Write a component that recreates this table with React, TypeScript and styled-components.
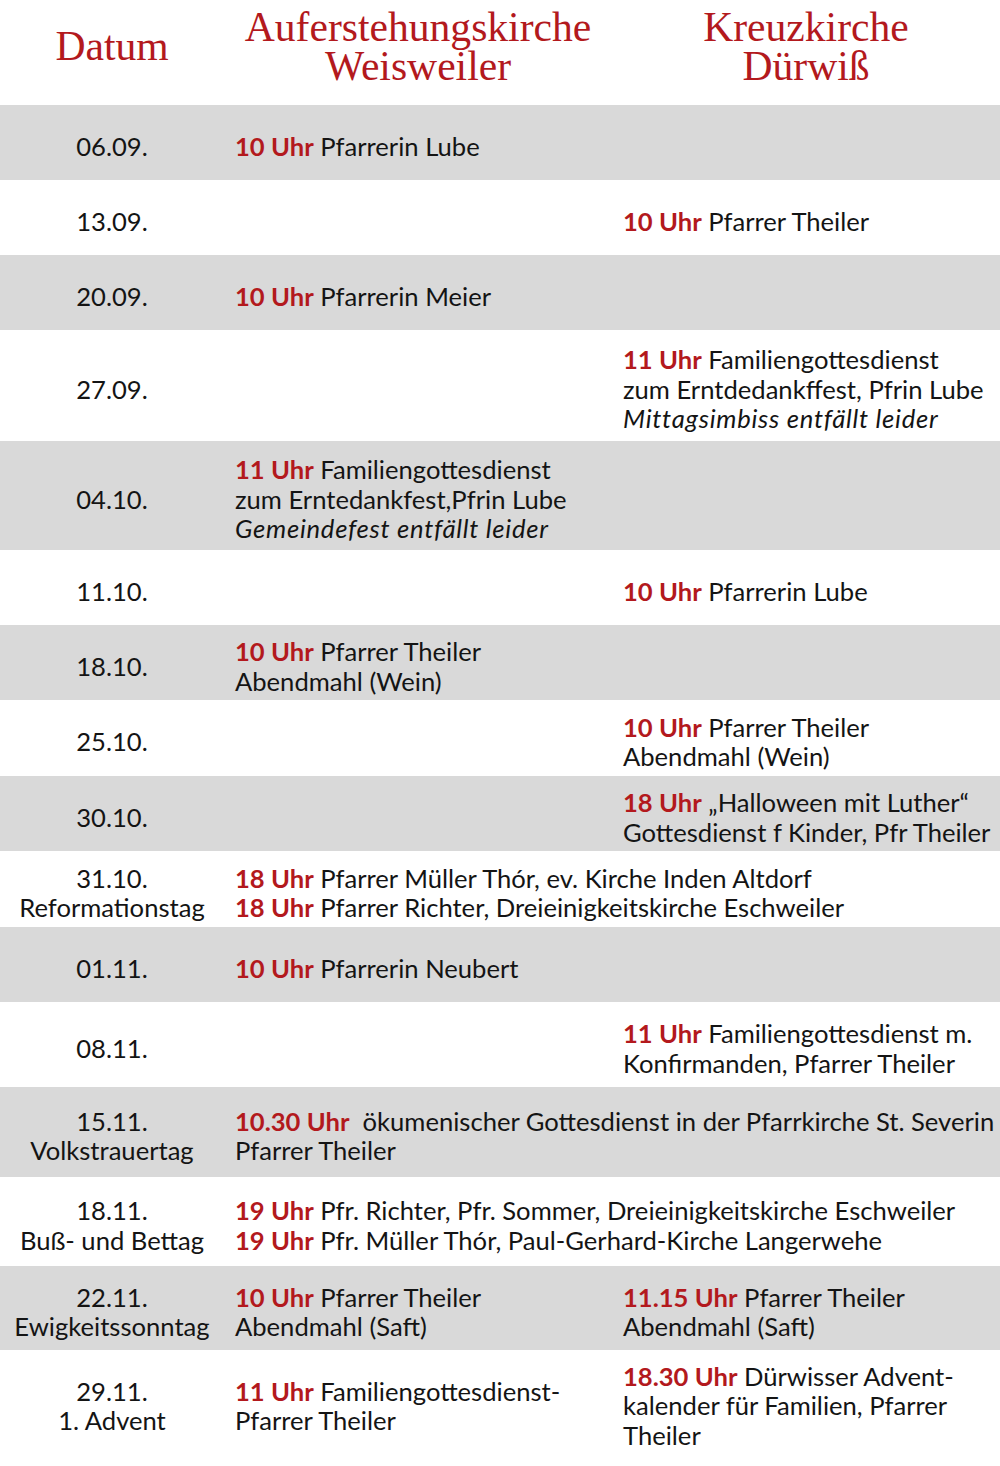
import React from 'react';
import styled, { createGlobalStyle } from 'styled-components';

const Global = createGlobalStyle`
  html, body { margin: 0; padding: 0; background: #fff; }
  body { font-family: Lato, "Noto Sans", sans-serif; color: #141414; }
  * { box-sizing: border-box; }
`;

const RED = '#b3191d';

const Table = styled.div`
  width: 1000px;
`;

const HeaderRow = styled.div`
  display: grid;
  grid-template-columns: 224px 388px 388px;
  height: 105px;
  padding-bottom: 12px;
  align-items: center;
`;

const HeadCell = styled.div`
  font-family: "Liberation Serif", "Times New Roman", serif;
  font-size: 41.6px;
  line-height: 39px;
  color: ${RED};
  text-align: center;
`;

const Row = styled.div<{ $shade: boolean; $h: number }>`
  display: grid;
  grid-template-columns: 224px 388px 388px;
  height: ${(p) => p.$h}px;
  padding-top: 8px;
  align-items: center;
  background: ${(p) => (p.$shade ? '#d9d9d9' : '#ffffff')};
`;

const DateCell = styled.div`
  text-align: center;
  font-size: 25.6px;
  line-height: 29.5px;
  white-space: nowrap;
`;

const Cell = styled.div<{ $span?: boolean }>`
  padding-left: 11px;
  grid-column: ${(p) => (p.$span ? '2 / 4' : 'auto')};
  font-size: 25.6px;
  line-height: 29.5px;
`;

const Line = styled.div<{ $italic?: boolean }>`
  white-space: nowrap;
  font-style: ${(p) => (p.$italic ? 'italic' : 'normal')};
  letter-spacing: ${(p) => (p.$italic ? '0.75px' : '0')};
`;

const Time = styled.span`
  color: ${RED};
  font-weight: 700;
`;

type Seg = { t?: string; s: string; i?: boolean };
type RowData = {
  d: string[];
  h: number;
  c2?: Seg[];
  c3?: Seg[];
  span?: boolean;
};

const rows: RowData[] = [
  { d: ['06.09.'], h: 75, c2: [{ t: '10 Uhr', s: 'Pfarrerin Lube' }] },
  { d: ['13.09.'], h: 75, c3: [{ t: '10 Uhr', s: 'Pfarrer Theiler' }] },
  { d: ['20.09.'], h: 75, c2: [{ t: '10 Uhr', s: 'Pfarrerin Meier' }] },
  {
    d: ['27.09.'],
    h: 111,
    c3: [
      { t: '11 Uhr', s: 'Familiengottesdienst' },
      { s: 'zum Erntdedankffest, Pfrin Lube' },
      { s: 'Mittagsimbiss entfällt leider', i: true },
    ],
  },
  {
    d: ['04.10.'],
    h: 109,
    c2: [
      { t: '11 Uhr', s: 'Familiengottesdienst' },
      { s: 'zum Erntedankfest,Pfrin Lube' },
      { s: 'Gemeindefest entfällt leider', i: true },
    ],
  },
  { d: ['11.10.'], h: 75, c3: [{ t: '10 Uhr', s: 'Pfarrerin Lube' }] },
  {
    d: ['18.10.'],
    h: 75,
    c2: [{ t: '10 Uhr', s: 'Pfarrer Theiler' }, { s: 'Abendmahl (Wein)' }],
  },
  {
    d: ['25.10.'],
    h: 76,
    c3: [{ t: '10 Uhr', s: 'Pfarrer Theiler' }, { s: 'Abendmahl (Wein)' }],
  },
  {
    d: ['30.10.'],
    h: 75,
    c3: [
      { t: '18 Uhr', s: '„Halloween mit Luther“' },
      { s: 'Gottesdienst f Kinder, Pfr Theiler' },
    ],
  },
  {
    d: ['31.10.', 'Reformationstag'],
    h: 76,
    span: true,
    c2: [
      { t: '18 Uhr', s: 'Pfarrer Müller Thór, ev. Kirche Inden Altdorf' },
      { t: '18 Uhr', s: 'Pfarrer Richter, Dreieinigkeitskirche Eschweiler' },
    ],
  },
  { d: ['01.11.'], h: 75, c2: [{ t: '10 Uhr', s: 'Pfarrerin Neubert' }] },
  {
    d: ['08.11.'],
    h: 85,
    c3: [
      { t: '11 Uhr', s: 'Familiengottesdienst m.' },
      { s: 'Konfirmanden, Pfarrer Theiler' },
    ],
  },
  {
    d: ['15.11.', 'Volkstrauertag'],
    h: 90,
    span: true,
    c2: [
      { t: '10.30 Uhr', s: '\u00a0ökumenischer Gottesdienst in der Pfarrkirche St. Severin' },
      { s: 'Pfarrer Theiler' },
    ],
  },
  {
    d: ['18.11.', 'Buß- und Bettag'],
    h: 89,
    span: true,
    c2: [
      { t: '19 Uhr', s: 'Pfr. Richter, Pfr. Sommer, Dreieinigkeitskirche Eschweiler' },
      { t: '19 Uhr', s: 'Pfr. Müller Thór, Paul-Gerhard-Kirche Langerwehe' },
    ],
  },
  {
    d: ['22.11.', 'Ewigkeitssonntag'],
    h: 84,
    c2: [{ t: '10 Uhr', s: 'Pfarrer Theiler' }, { s: 'Abendmahl (Saft)' }],
    c3: [{ t: '11.15 Uhr', s: 'Pfarrer Theiler' }, { s: 'Abendmahl (Saft)' }],
  },
  {
    d: ['29.11.', '1. Advent'],
    h: 104,
    c2: [{ t: '11 Uhr', s: 'Familiengottesdienst-' }, { s: 'Pfarrer Theiler' }],
    c3: [
      { t: '18.30 Uhr', s: 'Dürwisser Advent-' },
      { s: 'kalender für Familien, Pfarrer' },
      { s: 'Theiler' },
    ],
  },
];

const Content = ({ segs, span }: { segs?: Seg[]; span?: boolean }) => (
  <Cell $span={span}>
    {segs?.map((seg, i) => (
      <Line key={i} $italic={seg.i}>
        {seg.t && (
          <>
            <Time>{seg.t}</Time>{' '}
          </>
        )}
        {seg.s}
      </Line>
    ))}
  </Cell>
);

export default function App() {
  return (
    <>
      <Global />
      <Table>
        <HeaderRow>
          <HeadCell>Datum</HeadCell>
          <HeadCell>
            Auferstehungskirche
            <br />
            Weisweiler
          </HeadCell>
          <HeadCell>
            Kreuzkirche
            <br />
            Dürwiß
          </HeadCell>
        </HeaderRow>
        {rows.map((r, idx) => (
          <Row key={idx} $shade={idx % 2 === 0} $h={r.h}>
            <DateCell>
              {r.d.map((l, j) => (
                <div key={j}>{l}</div>
              ))}
            </DateCell>
            <Content segs={r.c2} span={r.span} />
            {!r.span && <Content segs={r.c3} />}
          </Row>
        ))}
      </Table>
    </>
  );
}
